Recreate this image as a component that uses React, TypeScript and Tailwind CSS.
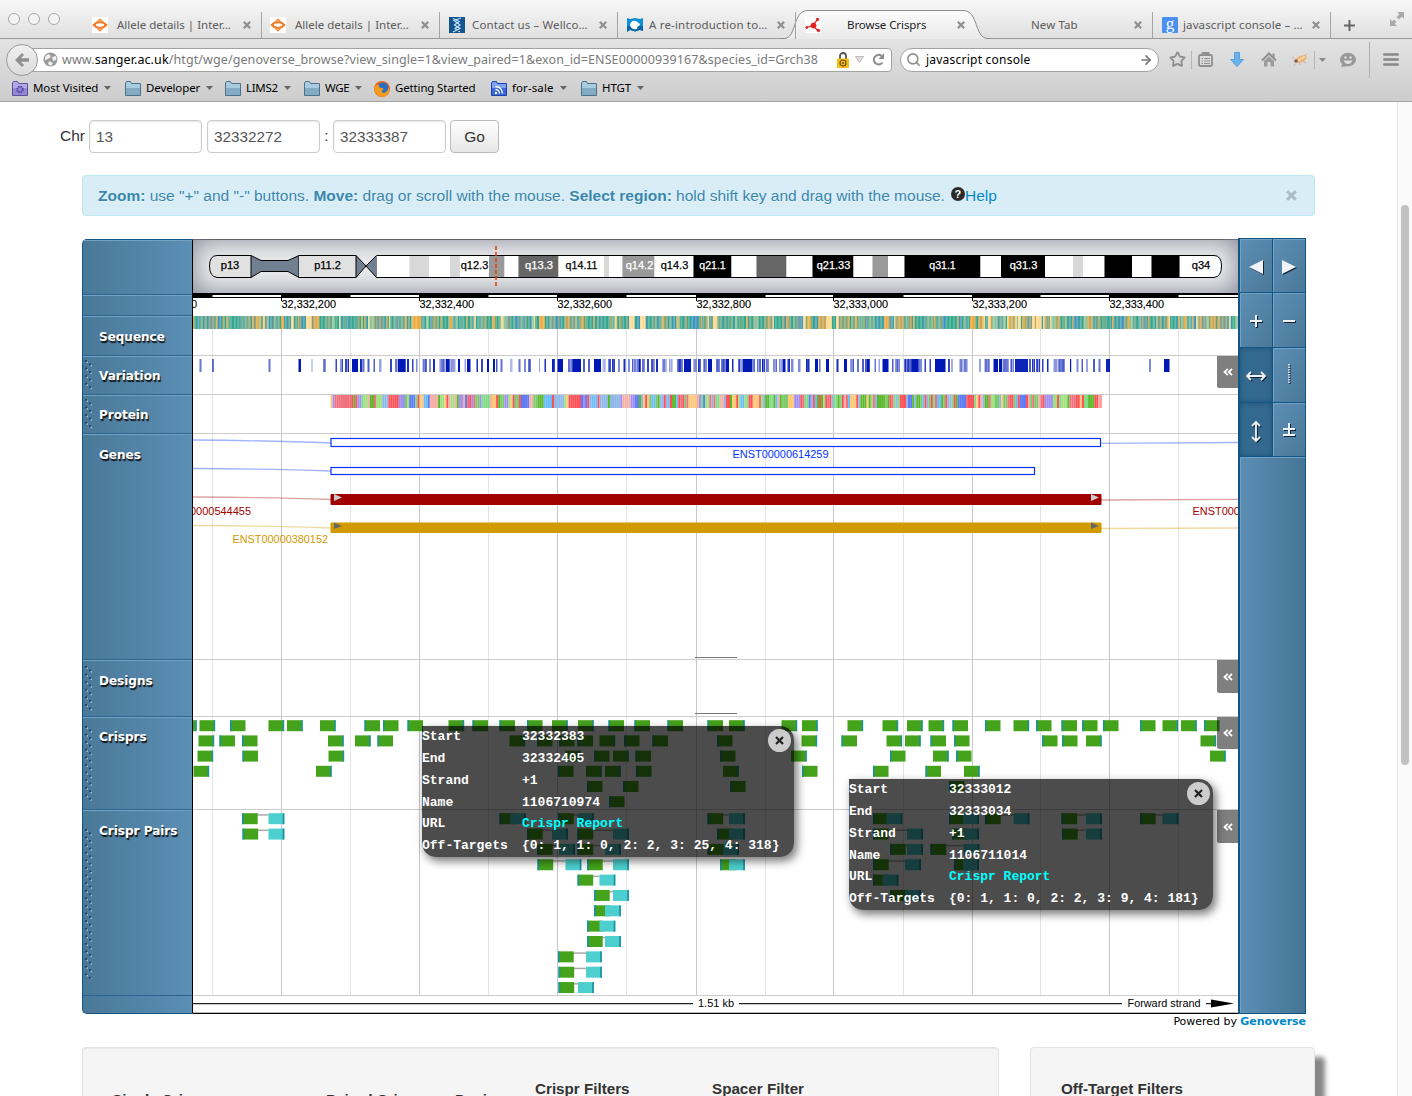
import { type ReactNode } from "react";
import { Search, Star, ArrowRight } from "lucide-react";

const LEFT = 193;
const WIDTH = 1045;
const MAJOR = [281.5, 419.5, 557.5, 696.5, 833.5, 972.5, 1109.5];
const MINOR = [212.5, 350.5, 488.5, 626.5, 765.5, 903.5, 1040.5, 1178.5];

function noise(seed: number) {
  let s = seed;
  return () => {
    s = (s * 1664525 + 1013904223) % 4294967296;
    return s / 4294967296;
  };
}

function Track({ top, height, grid = true, line = true, children }: { top: number; height: number; grid?: boolean; line?: boolean; children?: ReactNode }) {
  return (
    <svg className="block shrink-0" width={WIDTH} height={height} viewBox={`${LEFT} ${top} ${WIDTH} ${height}`}>
      {grid && MINOR.map((x) => <rect key={x} x={x - 0.5} y={top} width={1} height={height} fill="#e4e4e4" />)}
      {grid && MAJOR.map((x) => <rect key={x} x={x - 0.5} y={top} width={1} height={height} fill="#c8c8c8" />)}
      {children}
      {line && <rect x={LEFT} y={top + height - 1} width={WIDTH} height={1} fill="#cccccc" />}
    </svg>
  );
}

const BANDS: [number, number, string][] = [
  [376.5, 409.5, "#fff"], [409.5, 429, "#d8d8d8"], [429, 450, "#fff"], [450, 460, "#d8d8d8"], [460, 489, "#fff"],
  [489, 504.5, "#999"], [504.5, 518.5, "#fff"], [518.5, 558.5, "#666"], [558.5, 604, "#fff"], [604, 609, "#d8d8d8"],
  [609, 622.5, "#fff"], [622.5, 654.5, "#999"], [654.5, 693.5, "#fff"], [693.5, 731.5, "#000"], [731.5, 756.5, "#fff"],
  [756.5, 786.5, "#666"], [786.5, 812.5, "#fff"], [812.5, 853.5, "#000"], [853.5, 872.5, "#fff"], [872.5, 888, "#999"],
  [888, 904.5, "#fff"], [904.5, 980.5, "#000"], [980.5, 1001, "#fff"], [1001, 1045, "#000"], [1045, 1073, "#fff"],
  [1073, 1083, "#d8d8d8"], [1083, 1104.5, "#fff"], [1104.5, 1132, "#000"], [1132, 1151.5, "#fff"], [1151.5, 1179.5, "#000"],
];
const BAND_NAMES: [number, string, string, number][] = [
  [230, "p13", "#000", 18.5], [327.5, "p11.2", "#000", 26.5], [474.5, "q12.3", "#000", 27.5], [539, "q13.3", "#fff", 28], [581.5, "q14.11", "#000", 32],
  [639.5, "q14.2", "#fff", 27.5], [674.5, "q14.3", "#000", 27.5], [712.5, "q21.1", "#fff", 26.5], [833.5, "q21.33", "#fff", 33.5], [942.5, "q31.1", "#fff", 26.5],
  [1023.5, "q31.3", "#fff", 27.5], [1201, "q34", "#000", 18.5],
];

function Karyotype() {
  return (
    <div className="h-[54px] bg-[#ececee] shadow-[inset_0_0_26px_#7d8190,inset_0_1px_0_#444]">
      <Track top={239} height={54} grid={false} line={false}>
        <path d="M251 255.5H217Q209.500 255.500 209.500 266T217 277.500H251Z" fill="#e1e1e1" />
        <path d="M251 255.500L261 260.500H288L299 255.500V277.500L288 271.500H261L251 277.500Z" fill="#708090" stroke="#000" />
        <rect x={299} y={255} width={57} height={22} fill="#e1e1e1" />
        <path d="M356 255.500L366 266L376.500 255.500V277.500L366 266L356 277.500Z" fill="#708090" stroke="#000" />
        <path d="M1179.500 255.500H1214Q1221.500 255.500 1221.500 266T1214 277.500H1179.500Z" fill="#fff" />
        {BANDS.map(([a, b, fill]) => <rect key={a} x={a} y={255} width={b - a} height={22} fill={fill} />)}
        <path d="M251 255.500H217Q209.500 255.500 209.500 266T217 277.500H251M299 255.500H356M299 277.500H356M376.500 255.500H1214Q1221.500 255.500 1221.500 266T1214 277.500H376.500" fill="none" stroke="#000" />
        {BAND_NAMES.map(([x, t, fill, w]) => (
          <text key={t + x} x={x} y={269} textAnchor="middle" textLength={w} lengthAdjust="spacingAndGlyphs" fill={fill} stroke={fill} strokeWidth={0.25} className="font-['Liberation_Sans'] text-[10.5px]">{t}</text>
        ))}
        <path d="M496 246V287" stroke="#f03c0c" strokeWidth={1.600} strokeDasharray="4 2" />
      </Track>
    </div>
  );
}

const TICKS = ["32,332,200", "32,332,400", "32,332,600", "32,332,800", "32,333,000", "32,333,200", "32,333,400"];

function Scale() {
  return (
    <Track top={293} height={23} line={false}>
      <rect x={LEFT} y={293} width={WIDTH} height={5} fill="#000" />
      <rect x={LEFT} y={298} width={WIDTH} height={18} fill="#fff" />
      {MINOR.map((x, i) => <rect key={x} x={x} y={295} width={(MAJOR[i] ?? 1240) - x - 0.500} height={2} fill="#fff" />)}
      {MAJOR.map((x, i) => (
        <g key={x}>
          <rect x={x - 0.500} y={297} width={1} height={4} fill="#000" />
          <text x={x} y={308} textLength={54.500} lengthAdjust="spacingAndGlyphs" className="font-['Liberation_Sans'] text-[11px]" stroke="#000" strokeWidth={0.150}>{TICKS[i]}</text>
        </g>
      ))}
      <text x={191} y={308} className="font-['Liberation_Sans'] text-[11px]">0</text>
    </Track>
  );
}

const SEQ = ["#33a78c", "#3c93bb", "#35a58e", "#f0a83a", "#88a670", "#fbd98f", "#6fa883", "#5fae9e", "#479d9c", "#c9a552", "#8cc59a", "#7f9d86", "#3f9fa0", "#33a78c", "#70b08a"];
const AMINO = ["#ff4f57", "#5bb82a", "#6bbcfb", "#feca7a", "#7fdb86", "#a090f0", "#5bb82a", "#f0707c", "#9fe080", "#8fb8e8", "#7ac96a", "#f5b0a8", "#ff4f57", "#5f7cf5"];

function Stripes({ from, to, step, y, palette, seed, repeat }: { from: number; to: number; step: number; y: number; palette: string[]; seed: number; repeat: number }) {
  const rand = noise(seed);
  const n = Math.ceil((to - from) / step);
  const colors: string[] = [];
  for (let i = 0; i < n; i++) {
    const next = palette[Math.floor(rand() * palette.length)];
    colors.push(i > 0 && rand() < repeat ? colors[i - 1] : next);
  }
  return (
    <g>
      {colors.map((fill, i) => {
        const x = from + i * step;
        return <rect key={i} x={x} y={y} width={Math.min(step, to - x)} height={13} fill={fill} />;
      })}
    </g>
  );
}

/* start, width, opacity of every cluster of variants */
const VARIANTS: [number, number, number][] = [
  [199.5, 2, 0.6], [212, 2, 0.6], [268.500, 2, 0.6], [298.500, 2.500, 1], [311.500, 1, 0.4], [323, 3, 0.7], [335.500, 1.500, 0.8], [340, 3, 0.8], [345, 2, 0.8], [347.500, 1.500, 0.9],
  [352, 6, 1], [360, 2.500, 0.9], [363, 1.500, 0.6], [367.500, 2, 0.7], [373.500, 1.500, 0.7], [379, 2.500, 0.4], [390, 2, 0.8], [395, 2, 0.6], [397.700, 8, 1], [407, 2, 0.9],
  [412, 1.500, 0.8], [416, 1.500, 0.5], [422.700, 4, 0.8], [429, 2, 0.5], [433, 2, 0.9], [439.500, 5, 0.85], [445.700, 4, 1], [450.500, 5, 0.5], [458, 2, 1], [464.500, 1.500, 0.4],
  [467, 3.500, 1], [476.500, 1.500, 0.9], [481, 2, 0.8], [487, 2, 1], [493, 2, 1], [496, 1.500, 0.7], [500.500, 2, 0.6], [510, 2.500, 0.3], [518.500, 2, 0.6], [524, 2, 0.5],
  [528, 3, 0.7], [539, 1, 0.4], [544.500, 1.500, 0.9], [552, 3, 0.9], [557.500, 5.500, 1], [568, 5, 0.7], [573, 8, 1], [583, 2, 0.7], [588, 2, 0.7], [594, 7, 1],
  [602.500, 3, 0.5], [608, 3, 0.8], [612, 3, 0.7], [618, 2, 0.5], [623.500, 2, 0.9], [628, 2, 0.5], [632, 5, 0.6], [637, 4, 0.9], [642, 3, 0.6], [647, 2, 0.8], [651, 4, 0.8], [656, 2, 0.9],
  [662, 5, 0.5], [669, 4, 0.4], [677, 6, 0.85], [684, 7, 1], [693.500, 3, 0.6], [698, 3, 0.9], [703, 4, 0.7], [708, 4, 1], [716, 4, 0.6], [721, 5, 0.8], [726, 3, 1], [732, 1.500, 0.9],
  [738, 5, 0.7], [743, 9, 1], [752, 3, 0.7], [757, 4, 0.6], [762, 3, 0.8], [766, 3, 0.7], [773, 4, 0.6], [779, 3, 0.6], [782.500, 3, 1], [787, 3, 0.8], [791, 2.500, 0.5], [798, 2.500, 0.5],
  [806, 4, 0.8], [815, 3, 1], [819, 1.500, 0.6], [826, 3, 1], [836.500, 2, 0.9], [844, 3, 1], [850, 4, 0.7], [857, 2, 0.6], [862, 2, 0.7], [865, 5, 0.9], [874.500, 1.500, 0.6], [878.500, 1.500, 0.4],
  [882.500, 6, 1], [892, 1.500, 0.7], [895, 5, 0.6], [904, 8, 0.8], [912, 6, 1], [918, 4, 0.7], [924.500, 1.500, 0.8], [929.500, 1.500, 0.8], [935, 10.500, 1], [948, 2, 0.8], [951.500, 1, 0.7],
  [959.500, 3, 0.7], [963.500, 4, 0.9], [979, 2, 0.4], [984.500, 5, 0.8], [993.500, 4.500, 1], [999, 3, 1], [1002.500, 6, 0.8], [1010, 4, 0.6], [1015, 13, 0.95], [1029, 2, 0.7], [1032, 3, 0.9], [1036, 4, 0.7],
  [1042, 1.500, 0.8], [1047, 1.500, 0.9], [1053.500, 4, 0.5], [1058.500, 6, 0.9], [1070, 1.200, 1], [1076.500, 2, 0.5], [1081.500, 1.500, 0.7], [1086, 2, 0.4], [1093, 2, 0.7], [1098.500, 2, 0.6],
  [1106, 4, 0.95], [1149, 2, 0.5], [1164, 5.500, 1],
];

function Variants() {
  const rand = noise(91);
  return (
    <Track top={356} height={39}>
      {VARIANTS.map(([x, w, o]) => {
        if (o >= 0.95 || w < 3) return <rect key={x} x={x} y={359} width={w} height={13} fill="#0018b4" opacity={o} />;
        return Array.from({ length: Math.round(w) }, (_, i) => (
          <rect key={`${x}-${i}`} x={x + i} y={359} width={1} height={13} fill="#0018b4" opacity={Math.min(1, o * (0.55 + rand() * 0.7))} />
        ));
      })}
    </Track>
  );
}

function Connector({ d, color }: { d: string; color: string }) {
  return <path d={d} fill="none" stroke={color} strokeWidth={1.300} opacity={0.370} />;
}

function Genes() {
  const label = "font-['Liberation_Sans'] text-[11px]";
  return (
    <Track top={434} height={226}>
      <Connector color="#0033ff" d="M193 440Q270 440.500 331 443M1101 443.300L1238 442.500" />
      <rect x={331} y={438.500} width={769.500} height={8} fill="#fff" stroke="#0033ff" strokeWidth={1.200} />
      <text x={732.500} y={458} textLength={96} lengthAdjust="spacingAndGlyphs" fill="#0033ff" className={label}>ENST00000614259</text>
      <Connector color="#0033ff" d="M193 468.500Q270 469 331 471" />
      <rect x={331} y={467.500} width={703.500} height={7} fill="#fff" stroke="#0033ff" strokeWidth={1.200} />
      <Connector color="#a00000" d="M193 497Q270 497.500 331 499.500M1101 500L1238 499.300" />
      <rect x={330.500} y={494} width={771} height={11} rx={1} fill="#a00000" />
      <path d="M334 494L342 497.500L334 501ZM1091 494L1099 497.500L1091 501Z" fill="#ccc" />
      <text x={190} y={514.500} textLength={61} lengthAdjust="spacingAndGlyphs" fill="#a00000" className={label}>0000544455</text>
      <text x={1192.500} y={514.500} textLength={96} lengthAdjust="spacingAndGlyphs" fill="#a00000" className={label}>ENST00000544455</text>
      <Connector color="#d09a00" d="M193 525.500Q270 526 331 528M1101 528.500L1238 528" />
      <rect x={330.500} y={522.500} width={771} height={10.500} rx={1} fill="#d09a00" />
      <path d="M334 522.500L342 526L334 529ZM1091 522.500L1099 526L1091 529Z" fill="#666" />
      <text x={232.500} y={543} textLength={95.500} lengthAdjust="spacingAndGlyphs" fill="#d09a00" className={label}>ENST00000380152</text>
      <rect x={695} y={657} width={42} height={1} fill="#777" />
    </Track>
  );
}

/* left edge of each guide; a trailing R marks the PAM on the right side */
const CRISPRS: string[] = [
  "181R 199.5R 230L 268.5R 287R 320R 364.5L 383L 407.5L 448.5R 472.5L 499.5L 527L 552R 578R 608.5L 634.5L 667.5L 707.5L 729R 781.5R 802R 847.5R 882.5R 907R 928.5R 952.5L 985L 1013.5R 1036L 1061.5L 1082L 1103L 1140L 1162.5R 1181R 1204L",
  "198.5R 219.5L 242L 328R 355R 377.5L 509.5R 537L 559L 577.5L 599.5R 624L 652.5L 717L 801.5R 841.5L 886.5R 905R 930.5L 954L 1042L 1062L 1086R 1200.5R",
  "197.5R 242.5L 328.5R 565R 594L 613R 635.5L 720L 791R 890L 933R 956L 1210R",
  "193.5R 316R 558L 586R 605R 636L 723R 802L 873L 925.5L 964R",
  "587L 623L 730L 949L",
  "609L",
];

function Crisprs() {
  return (
    <Track top={717} height={93}>
      {CRISPRS.flatMap((row, r) =>
        row.split(" ").map((item) => {
          const x = parseFloat(item);
          const y = 720.200 + r * 15.200;
          return (
            <g key={`${r}-${item}`}>
              <rect x={x} y={y} width={15.500} height={11} fill="#45a31b" />
              <rect x={item.endsWith("R") ? x + 14.200 : x} y={y} width={1.500} height={11} fill="#1b93a0" />
            </g>
          );
        }),
      )}
    </Track>
  );
}

const PAIRS: [number, number][][] = [
  [[242, 268.5], [499.5, 510], [558, 578], [707.5, 729], [873, 886.5], [949, 963], [985, 1013.5], [1061.5, 1086], [1140, 1162.5]],
  [[242.5, 268.5], [527, 552], [577.5, 613], [717, 729], [873, 907], [952, 963], [1062, 1086]],
  [[537, 559], [577.5, 605], [707.5, 723], [890, 907], [930.5, 963.5]],
  [[537.5, 565.5], [587, 613], [720, 729], [873, 905], [954, 963]],
  [[577.5, 599.5], [873, 882.5]],
  [[594, 613], [890, 905]],
  [[594, 605]], [[587, 599.5]], [[587, 605]], [[558, 586]], [[558.5, 586]], [[558.5, 578]],
];

function Pairs() {
  return (
    <Track top={810} height={186}>
      {PAIRS.flatMap((row, r) =>
        row.map(([a, b]) => {
          const y = 813.200 + r * 15.350;
          return (
            <g key={`${r}-${a}`}>
              <rect x={a + 15} y={y + 1} width={Math.max(0, b - a - 15)} height={1.500} fill="#aaa" />
              <rect x={a} y={y} width={15.700} height={11} fill="#45a31b" />
              <rect x={a} y={y} width={1.700} height={11} fill="#1b93a0" />
              <rect x={b} y={y} width={15.700} height={11} fill="#4dcfcf" />
              <rect x={b + 14.200} y={y} width={1.700} height={11} fill="#1b93a0" />
            </g>
          );
        }),
      )}
    </Track>
  );
}

function Strand() {
  return (
    <Track top={996} height={17} grid={false} line={false}>
      <path d="M193 1003.700H693M739 1003.700H1122M1206 1003.700H1213" stroke="#222" strokeWidth={1.300} />
      <path d="M1211 999.500L1234 1003.500L1211 1007.500Z" fill="#000" />
      <text x={698} y={1007} textLength={36} lengthAdjust="spacingAndGlyphs" className="font-['Liberation_Sans'] text-[11px]">1.51 kb</text>
      <text x={1127.500} y={1007} textLength={73} lengthAdjust="spacingAndGlyphs" className="font-['Liberation_Sans'] text-[11px]">Forward strand</text>
      <rect x={193} y={1012} width={WIDTH} height={1} fill="#bbb" />
    </Track>
  );
}

function Grip({ height }: { height: number }) {
  const rows = Math.floor(height / 7.500);
  return (
    <svg className="block shrink-0" width={9} height={height}>
      {Array.from({ length: rows }, (_, i) => (
        <g key={i}>
          <rect x={0} y={i * 7.600} width={2} height={2} fill="#23435c" />
          <rect x={1.500} y={i * 7.600 + 1.500} width={1.500} height={1.500} fill="#9dbdd3" />
          <rect x={4} y={i * 7.600 + 3.500} width={2} height={2} fill="#23435c" />
          <rect x={5.500} y={i * 7.600 + 5} width={1.500} height={1.500} fill="#9dbdd3" />
        </g>
      ))}
    </svg>
  );
}

function Label({ size, name, grip, gripPad = "pt-[3px]", className = "" }: { size: string; name?: string; grip?: number; gripPad?: string; className?: string }) {
  return (
    <div className={`relative flex border-t border-t-[#76a2c1] border-b border-b-[#2d6590] pl-[2px] ${size}`}>
      <div className={`w-[14px] ${gripPad}`}>{grip ? <Grip height={grip} /> : null}</div>
      {name && <div className={`font-['DejaVu_Sans'] text-[12px] leading-[16px] font-bold whitespace-nowrap text-white [text-shadow:1px_2px_1px_#111] ${className}`}>{name}</div>}
    </div>
  );
}

function Handle({ className }: { className: string }) {
  return (
    <div className={`absolute right-0 flex w-[21px] items-center justify-center rounded-bl-[2px] bg-black/50 ${className}`}>
      <svg width="10" height="8" viewBox="0 0 10 8" fill="none" stroke="#fff" strokeWidth="1.8"><path d="M4.800 0.800L1.500 4L4.800 7.200M9 0.800L5.700 4L9 7.200" /></svg>
    </div>
  );
}

function Popup({ className, rows }: { className: string; rows: [string, string][] }) {
  return (
    <div className={`absolute h-[131px] rounded-[14px] rounded-tl-none bg-black/70 font-['Liberation_Mono'] text-[13px] leading-[21.8px] font-bold text-white shadow-[3px_4px_10px_rgba(0,0,0,0.55)] ${className}`}>
      <div>
        {rows.map(([k, v]) => (
          <div key={k} className="flex h-[21.850px] whitespace-pre">
            <span className="w-[100px]">{k}</span>
            <span className={k === "URL" ? "text-[#00ffff]" : ""}>{v}</span>
          </div>
        ))}
      </div>
      <div className="absolute top-[2.500px] right-[3.500px] flex size-[23px] items-center justify-center rounded-full bg-[#cccccc]">
        <svg width="9" height="9" viewBox="0 0 9 9" stroke="#222" strokeWidth="2.200"><path d="M1 1L8 8M8 1L1 8" /></svg>
      </div>
    </div>
  );
}

function CloseX({ color = "#8f8f8f", size = 8 }: { color?: string; size?: number }) {
  return <svg className="shrink-0" width={size} height={size} viewBox="0 0 8 8" stroke={color} strokeWidth="2.200"><path d="M0.800 0.800L7.200 7.200M7.200 0.800L0.800 7.200" /></svg>;
}

function OrangeKnot() {
  return (
    <svg width="16" height="16" viewBox="0 0 16 16">
      <rect width="16" height="16" fill="#fff" />
      <path d="M0.500 8L3.500 5.500L8 1.200L12.500 5.500L15.500 8L12.500 10.500L8 14.800L3.500 10.500Z" fill="#f58a3c" />
      <ellipse cx="8" cy="8" rx="4" ry="1.900" fill="#fff" />
      <path d="M4.200 5.500L6.500 4.800M9.500 4.800L11.800 5.500M4.200 10.500L6.500 11.200M9.500 11.200L11.800 10.500M7 3.800H9M7 12.200H9" stroke="#fbd3b5" strokeWidth=".8" />
      <path d="M1.500 8L4 6L8 5.200L12 6L14.500 8L12 10L8 10.800L4 10Z" fill="none" stroke="#f07a26" strokeWidth="1.500" />
    </svg>
  );
}

function Tab({ icon, text, width, iconPad, textPad, tracking = "", active }: { icon?: ReactNode; text: string; width: string; iconPad: string; textPad: string; tracking?: string; active?: boolean }) {
  return (
    <div className={`relative flex h-[27px] items-center pb-px ${width} ${iconPad} ${active ? "" : "border-r border-[#a5a5a5]"}`}>
      {icon}
      <span className={`font-['Noto_Sans'] text-[11.500px] whitespace-nowrap ${textPad} ${tracking} ${active ? "text-[#1d1d1d]" : "text-[#5b5b5b]"}`}>{text}</span>
      <div className="absolute right-[10.500px] flex"><CloseX /></div>
    </div>
  );
}

function Folder({ kind = "plain" }: { kind?: "plain" | "gear" | "feed" }) {
  const top = kind === "plain" ? "#a9cbe0" : kind === "gear" ? "#b4a8e6" : "#7da4f0";
  const bottom = kind === "plain" ? "#7ba3bd" : kind === "gear" ? "#8d7fcb" : "#2a57d8";
  const edge = kind === "plain" ? "#4e7089" : kind === "gear" ? "#5c4fa0" : "#1c3fa8";
  return (
    <svg className="shrink-0" width="16" height="15" viewBox="0 0 16 15">
      <path d="M.500 14.500V2L1.500 .500H5.500L6.500 2.500H15.500V14.500Z" fill={top} stroke={edge} />
      <rect x="1" y="7" width="14" height="7" fill={bottom} opacity=".8" />
      {kind === "gear" && <circle cx="8" cy="8.500" r="2.800" fill="none" stroke="#5547a8" strokeWidth="2" strokeDasharray="1.600 .6" />}
      {kind === "feed" && <g fill="none" stroke="#fff" strokeWidth="1.400"><path d="M4.500 8.500A4 4 0 0 1 8.500 12.500M4.500 5.500A7 7 0 0 1 11.500 12.500" /><circle cx="5" cy="12" r=".5" /></g>}
    </svg>
  );
}

function Bookmark({ icon, text, width, tracking = "", arrow = true }: { icon: ReactNode; text: string; width: string; tracking?: string; arrow?: boolean }) {
  return (
    <div className={`flex shrink-0 items-center gap-[5px] ${width}`}>
      {icon}
      <span className={`-mt-[2px] font-['Noto_Sans'] text-[11.500px] leading-4 whitespace-nowrap text-black ${tracking}`}>{text}</span>
      {arrow && <svg className="-mt-px ml-px shrink-0" width="7" height="4" viewBox="0 0 7 4"><path d="M0 0H7L3.500 4Z" fill="#666" /></svg>}
    </div>
  );
}

function Browser() {
  return (
    <div className="h-[102px] border-b border-[#a3a3a3] bg-linear-to-b from-[#f6f6f6] via-[#e2e2e2] via-40% to-[#cdcdcd]">
      <div className="relative flex h-[39px] items-end bg-linear-to-b from-[#f8f8f8] to-[#dfdfdf] shadow-[inset_0_-1px_0_#9a9a9a]">
        <svg className="absolute bottom-0 left-[780px]" width="210" height="30" viewBox="780 9 210 30">
          <defs><linearGradient id="tab" x1="0" y1="0" x2="0" y2="1"><stop offset="0" stopColor="#fbfbfb" /><stop offset="1" stopColor="#e9e9e9" /></linearGradient></defs>
          <path d="M780 38.500H784C797 38.500 792 10.500 808 10.500H963C979 10.500 974 38.500 988 38.500V40H780Z" fill="url(#tab)" />
          <path d="M780 38.500H784C797 38.500 792 10.500 808 10.500H963C979 10.500 974 38.500 988 38.500H990" fill="none" stroke="#8c8c8c" />
        </svg>
        <div className="flex h-[39px] w-[84px] gap-[8px] pt-[13px] pl-[8px]">
          <i className="size-3 rounded-full border border-[#a8a8a8] bg-[#f4f4f4]" />
          <i className="size-3 rounded-full border border-[#a8a8a8] bg-[#f4f4f4]" />
          <i className="size-3 rounded-full border border-[#a8a8a8] bg-[#f4f4f4]" />
        </div>
        <Tab icon={<OrangeKnot />} text="Allele details | Inter…" width="w-[178px]" iconPad="pl-[8px]" textPad="pl-[9px]" />
        <Tab icon={<OrangeKnot />} text="Allele details | Inter…" width="w-[178px]" iconPad="pl-[8px]" textPad="pl-[9px]" />
        <Tab icon={<svg width="16" height="16" viewBox="0 0 16 16"><rect width="16" height="16" fill="#15558e" /><path d="M12 1L5 3.500L11 8L6 11.500L11 15M4 1.500L10 4.500L5.500 8L11 11.500L4 15" fill="none" stroke="#b8dcf0" strokeWidth="1.300" /></svg>} text="Contact us – Wellco…" width="w-[178px]" iconPad="pl-[9px]" textPad="pl-[7px]" tracking="tracking-[0.120px]" />
        <Tab icon={<svg width="16" height="16" viewBox="0 0 16 16"><path d="M0 1L3 2L8 1L13 2L16 1V14L13 13L8 14.500L3 13L0 15Z" fill="#0f8fd6" /><path d="M0 9V15L3 13L8 14.500L13 13L16 14V9Z" fill="#07558f" opacity=".7" /><path d="M3 8Q4 3 9 4L13 7L12 9Q10 9 10 12Q4 13 3 8Z" fill="#fff" /></svg>} text="A re-introduction to…" width="w-[178px]" iconPad="pl-[9px]" textPad="pl-[6px]" tracking="tracking-[0.180px]" />
        <Tab active icon={<svg width="16" height="16" viewBox="0 0 16 16"><rect width="16" height="16" fill="#fff" /><g stroke="#e02020" fill="#e02020"><path d="M1.500 10.500L8 8.500L12 3M8 9L13.500 14" strokeWidth="1.200" fill="none" /><circle cx="8.500" cy="8.500" r="2.500" /><circle cx="12.500" cy="2.500" r="1.200" /><circle cx="1.800" cy="10.500" r="1" /><circle cx="13.500" cy="13.500" r="1.200" /></g></svg>} text="Browse Crisprs" width="w-[179px]" iconPad="pl-[9px]" textPad="pl-[26px]" tracking="tracking-[-0.080px]" />
        <Tab text="New Tab" width="w-[178px]" iconPad="pl-[56px]" textPad="pl-0" tracking="tracking-[0.100px]" />
        <Tab icon={<span className="flex size-4 items-center justify-center rounded-[1px] bg-[#4a90f0] pb-1 font-['Liberation_Serif'] text-[17px] leading-none text-white">g</span>} text="javascript console – …" width="w-[178px]" iconPad="pl-[9px]" textPad="pl-[5px]" tracking="tracking-[0.120px]" />
        <svg className="mb-[8px] ml-[13px]" width="11" height="11" viewBox="0 0 11 11" stroke="#666" strokeWidth="2"><path d="M5.500 0V11M0 5.500H11" /></svg>
        <svg className="absolute top-[11px] right-[7px]" width="16" height="16" viewBox="0 0 16 16" fill="#aaa"><path d="M8 1H15V8L12.700 5.700L10 8.500L7.500 6L10.300 3.300ZM1 8L3.300 10.300L5 8.600L7.400 11L5.700 12.700L8 15H1Z" /></svg>
      </div>

      <div className="relative flex h-[41px] items-center">
        <div className="z-10 ml-[6px] flex size-8 shrink-0 items-center justify-center rounded-full border border-[#9a9a9a] bg-linear-to-b from-[#f0f0f0] to-[#dcdcdc]">
          <svg width="16" height="16" viewBox="0 0 16 16" fill="#8f8f8f"><path d="M1 8L8 1L10 3L6.800 6.300H15V9.700H6.800L10 13L8 15Z" /></svg>
        </div>
        <div className="-ml-[8px] flex h-6 w-[862px] shrink-0 items-center rounded-r-[4px] border border-[#a2a2a2] bg-white pl-[12px]">
          <svg className="shrink-0" width="15" height="15" viewBox="0 0 15 15"><circle cx="7.500" cy="7.500" r="7" fill="#9a9a9a" /><path d="M2 5Q5 1 7 3T5 7T2 8ZM9 5L13 4L13.500 8L10 9ZM6 9L10 11L8 14L5 12Z" fill="#eee" /></svg>
          <span className="ml-[4px] w-[766px] pt-px font-['Noto_Sans'] text-[12.500px] tracking-[0.100px] whitespace-nowrap text-[#7a7a7a]">www.<span className="text-black">sanger.ac.uk</span>/htgt/wge/genoverse_browse?view_single=1&amp;view_paired=1&amp;exon_id=ENSE00000939167&amp;species_id=Grch38</span>
          <svg className="ml-[9px] shrink-0" width="12" height="16" viewBox="0 0 12 16"><path d="M3 7V4A3 3 0 0 1 9 4V7" fill="none" stroke="#555" strokeWidth="1.800" /><rect y="6.500" width="12" height="9.500" rx="1" fill="#f5bd12" /><circle cx="6" cy="11" r="3" fill="none" stroke="#6b4c00" strokeWidth="1.200" /><circle cx="6" cy="11" r="1" fill="#6b4c00" /></svg>
          <svg className="ml-[6px] shrink-0" width="9" height="7" viewBox="0 0 9 7"><path d="M0.500 0.500H8.500L4.500 6.500Z" fill="#ddd" stroke="#bbb" /></svg>
          <svg className="ml-[8px] shrink-0" width="13" height="13" viewBox="0 0 13 13"><path d="M10.500 9.500A4.800 4.800 0 1 1 9.500 2.800" fill="none" stroke="#8c8c8c" strokeWidth="2" /><path d="M12 0V6H6.500Z" fill="#8c8c8c" /></svg>
        </div>
        <div className="ml-[8px] flex h-6 w-[259px] shrink-0 items-center rounded-full border border-[#a2a2a2] bg-white pl-[5px]">
          <Search size={15} color="#8f8f8f" strokeWidth={2.500} />
          <span className="ml-[5px] w-[213px] font-['Noto_Sans'] text-[12px] tracking-[0.230px] text-black">javascript console</span>
          <ArrowRight size={14} color="#777" strokeWidth={2.800} />
        </div>
        <Star className="ml-[10px] shrink-0" size={17} color="#8f8f8f" strokeWidth={2.600} />
        <i className="ml-[5px] h-[18px] w-px bg-[#b5b5b5]" />
        <svg className="ml-[6px] shrink-0" width="15" height="15" viewBox="0 0 15 15" fill="none" stroke="#8f8f8f"><rect x="1" y="3" width="13" height="11" rx="1.500" strokeWidth="1.800" /><path d="M4.500 3V1H10.500V3" strokeWidth="1.800" /><path d="M3.500 6.500H5M6 6.500H12M3.500 9H5M6 9H12M3.500 11.500H5M6 11.500H12" strokeWidth="1.200" /></svg>
        <svg className="ml-[17px] shrink-0" width="14" height="15" viewBox="0 0 14 15"><path d="M4.500 .500H9.500V7.500H13.500L7 14.500L.500 7.500H4.500Z" fill="#66b3ef" stroke="#5a9fd6" /></svg>
        <svg className="ml-[17px] shrink-0" width="16" height="15" viewBox="0 0 16 15"><path d="M1 8.500L8 1.500L15 8.500" fill="none" stroke="#8f8f8f" strokeWidth="2" /><path d="M3 9L8 4.200L13 9V14.500H9.500V10H6.500V14.500H3Z" fill="#9c9c9c" /><path d="M11.500 1.500H13.500V6L11.500 4Z" fill="#8f8f8f" /></svg>
        <svg className="ml-[15px] shrink-0" width="17" height="14" viewBox="0 0 17 14"><ellipse cx="9" cy="6" rx="6" ry="3.200" transform="rotate(-25 9 6)" fill="#eab676" /><path d="M6 7.500L13 3.500" stroke="#f6d9a8" strokeWidth="1.500" /><circle cx="4" cy="8" r="1.800" fill="#8f5448" /><path d="M2 5L0 4M3 11L2 13M7 9L8 12M11 8L14 10M12 3L15 1" stroke="#c8a08a" strokeWidth=".8" /></svg>
        <i className="ml-[5px] h-[18px] w-px bg-[#b5b5b5]" />
        <svg className="ml-[4px] shrink-0" width="7" height="4" viewBox="0 0 7 4"><path d="M0 0H7L3.500 4Z" fill="#888" /></svg>
        <svg className="ml-[14px] shrink-0" width="16" height="16" viewBox="0 0 16 16"><ellipse cx="8" cy="7.500" rx="8" ry="6.800" fill="#989898" /><path d="M1 15L3 10L8 14Z" fill="#989898" /><circle cx="5.500" cy="5.500" r="1.200" fill="#e0e0e0" /><circle cx="10.500" cy="5.500" r="1.200" fill="#e0e0e0" /><path d="M3.500 8.500H12.500Q11 12 8 12T3.500 8.500Z" fill="#e0e0e0" /></svg>
        <i className="ml-[13px] h-9 w-px bg-[#b0b0b0]" />
        <svg className="ml-[13px] shrink-0" width="16" height="13" viewBox="0 0 16 13" stroke="#888" strokeWidth="2.400" strokeLinecap="round"><path d="M1.200 1.500H14.800M1.200 6.500H14.800M1.200 11.500H14.800" /></svg>
      </div>

      <div className="flex h-[17px] items-center pl-[12px]">
        <Bookmark icon={<Folder kind="gear" />} text="Most Visited" width="w-[113px]" tracking="tracking-[-0.060px]" />
        <Bookmark icon={<Folder />} text="Developer" width="w-[100px]" tracking="tracking-[-0.120px]" />
        <Bookmark icon={<Folder />} text="LIMS2" width="w-[79px]" tracking="tracking-[-0.300px]" />
        <Bookmark icon={<Folder />} text="WGE" width="w-[70px]" tracking="tracking-[-0.300px]" />
        <Bookmark arrow={false} icon={<svg className="shrink-0" width="16" height="16" viewBox="0 0 16 16"><circle cx="8" cy="8" r="8" fill="#e8641b" /><circle cx="9" cy="7" r="5.500" fill="#2a6fc0" /><path d="M0 7Q2 3 5 4Q4 7 8 7L10 8Q6 10 9 12Q13 12 15 6Q17 13 10 16Q1 16 0 7Z" fill="#f59a1f" /></svg>} text="Getting Started" width="w-[117px]" tracking="tracking-[-0.150px]" />
        <Bookmark icon={<Folder kind="feed" />} text="for-sale" width="w-[90px]" tracking="tracking-[0.100px]" />
        <Bookmark icon={<Folder />} text="HTGT" width="w-[80px]" tracking="tracking-[-0.100px]" />
      </div>
    </div>
  );
}

function Control({ children, pressed, size }: { children: ReactNode; pressed?: boolean; size: string }) {
  return (
    <div className={`flex items-center justify-center border-r border-b border-[#115586] pt-[2px] ${size} ${pressed ? "bg-[#34698f] shadow-[inset_0_0_5px_#1d4f74]" : "bg-linear-to-br from-[#5d8fb4] to-[#4a7899] shadow-[inset_1px_1px_0_#76a2c1]"}`}>
      <svg width="24" height="24" viewBox="-12 -12 24 24" className="drop-shadow-[1px_1px_0_#112233]" stroke="#f0f4f8" fill="none" strokeWidth="2">{children}</svg>
    </div>
  );
}

const INPUT = "flex h-[33px] w-[113px] items-center rounded-[4px] border border-[#cccccc] bg-white pt-px pl-[6px] text-[15.300px] text-[#555] shadow-[inset_0_1px_2px_rgba(0,0,0,0.1)]";

export default function App() {
  return (
    <div className="relative h-[1096px] w-[1412px] overflow-hidden bg-white font-['Liberation_Sans',sans-serif]">
      <Browser />
      <div className="flex h-[994px]">
        <div className="w-[1397px] shrink-0">
          <div className="flex h-[73px] items-start pt-[18px] pl-[60px] text-[15.500px] text-[#333]">
            <span className="w-[29px] pt-[4px]">Chr</span>
            <div className={INPUT}>13</div>
            <div className={`ml-[5px] ${INPUT}`}>32332272</div>
            <span className="w-[13px] pt-[4px] text-center">:</span>
            <div className={INPUT}>32333387</div>
            <div className="ml-[4px] flex h-[33px] w-[49px] items-center justify-center rounded-[4px] border border-[#bbbbbb] bg-linear-to-b from-white to-[#e6e6e6] text-[15.500px]">Go</div>
          </div>

          <div className="ml-[82px] flex h-[41px] w-[1233px] items-center rounded-[4px] border border-[#bce8f1] bg-[#d9edf7] pl-[15px] text-[15.500px] whitespace-nowrap text-[#3a87ad] [text-shadow:0_1px_0_rgba(255,255,255,0.5)]">
            <span className="pt-px"><b>Zoom:</b> use "+" and "-" buttons. <b>Move:</b> drag or scroll with the mouse. <b>Select region:</b> hold shift key and drag with the mouse.</span>
            <span className="-mt-[3px] ml-[6px] flex size-[14px] items-center justify-center rounded-full bg-[#2b2b2b] text-[11px] font-bold text-white [text-shadow:none]">?</span>
            <span className="pt-px text-[#0088cc]">Help</span>
            <span className="mr-[17px] ml-auto"><CloseX color="#adbec6" size={11} /></span>
          </div>

          <div className="mt-[22px] ml-[82px] flex h-[776px] w-[1224px]">
            <div className="mt-px flex h-[775px] w-[111px] flex-col rounded-l-[5px] border border-[#115586] border-r-black bg-linear-to-r from-[#4a7899] to-[#5b8fb4]">
              <Label size="h-[55px]" />
              <Label size="h-[21px]" />
              <Label size="h-[40px]" name="Sequence" className="pt-[12px]" />
              <Label size="h-[39px]" name="Variation" className="pt-[11px]" grip={32} />
              <Label size="h-[39px]" name="Protein" className="pt-[11px]" grip={32} />
              <Label size="h-[226px]" name="Genes" className="pt-[12px]" />
              <Label size="h-[57px]" name="Designs" className="pt-[12px]" grip={46} gripPad="pt-[5px]" />
              <Label size="h-[93px]" name="Crisprs" className="pt-[11px]" grip={77} gripPad="pt-[8px]" />
              <Label size="h-[186px]" name="Crispr Pairs" className="pt-[12px]" grip={150} gripPad="pt-[18px]" />
            </div>
            <div className="relative mt-px flex h-[775px] w-[1045px] flex-col border-b border-black">
              <Karyotype />
              <Scale />
              <Track top={316} height={40}><Stripes from={193} to={1238} step={1.380} y={316} palette={SEQ} seed={7} repeat={0.350} /></Track>
              <Variants />
              <Track top={395} height={39}><Stripes from={330.500} to={1101.500} step={2.070} y={395} palette={AMINO} seed={23} repeat={0.300} /></Track>
              <Genes />
              <Track top={660} height={57}><rect x={695} y={713} width={42} height={1} fill="#777" /></Track>
              <Crisprs />
              <Pairs />
              <Strand />
              <Handle className="top-[117px] h-8" />
              <Handle className="top-[421px] h-[33px]" />
              <Handle className="top-[478px] h-8" />
              <Handle className="top-[571px] h-[33px]" />
              <Popup className="top-[487px] left-[229px] w-[372px]" rows={[["Start", "32332383"], ["End", "32332405"], ["Strand", "+1"], ["Name", "1106710974"], ["URL", "Crispr Report"], ["Off-Targets", "{0: 1, 1: 0, 2: 2, 3: 25, 4: 318}"]]} />
              <Popup className="top-[540px] left-[656px] w-[364px]" rows={[["Start", "32333012"], ["End", "32333034"], ["Strand", "+1"], ["Name", "1106711014"], ["URL", "Crispr Report"], ["Off-Targets", "{0: 1, 1: 0, 2: 2, 3: 9, 4: 181}"]]} />
            </div>
            <div className="flex h-[776px] w-[68px] flex-col border-t border-l-2 border-[#115586]">
              <div className="flex flex-wrap">
                <Control size="h-[54px] w-[33px]"><path d="M-7 0L7 -7V7Z" fill="#f0f4f8" stroke="none" /></Control>
                <Control size="h-[54px] w-[33px]"><path d="M7 0L-7 -7V7Z" fill="#f0f4f8" stroke="none" /></Control>
                <Control size="h-[55px] w-[33px]"><path d="M-6 0H6M0 -6V6" /></Control>
                <Control size="h-[55px] w-[33px]"><path d="M-6 0H6" /></Control>
                <Control pressed size="h-[55px] w-[33px]"><path d="M-8 0H8M-5 -4L-9 0L-5 4M5 -4L9 0L5 4" strokeWidth="1.800" /></Control>
                <Control size="h-[55px] w-[33px]"><path d="M0 -12V8" strokeWidth="1.500" strokeDasharray="1.500 1" /></Control>
                <Control pressed size="h-[54px] w-[33px]"><path d="M0 -8V9M-4 -5L0 -9L4 -5M-4 6L0 10L4 6" strokeWidth="1.800" /></Control>
                <Control size="h-[54px] w-[33px]"><path d="M-6 -2H6M0 -8V3M-6 4H6" /></Control>
              </div>
              <div className="flex-1 border-r border-b border-[#115586] bg-linear-to-r from-[#5b8fb4] to-[#467596] shadow-[inset_1px_1px_0_#76a2c1]" />
            </div>
          </div>

          <div className="flex h-[33px] w-[1306px] justify-end font-['DejaVu_Sans'] text-[11px] leading-[15px] tracking-[-0.030px] text-black">
            <span>Powered by <b className="text-[#0088cc]">Genoverse</b></span>
          </div>

          <div className="ml-[82px] flex h-[60px] gap-[31px] text-[15.200px] leading-5 font-bold whitespace-nowrap text-[#333]">
            <div className="flex h-[200px] w-[917px] rounded-[4px] border border-[#e3e3e3] bg-[#f5f5f5] pl-[29px] shadow-[inset_0_1px_1px_rgba(0,0,0,0.05)]">
              <span className="w-[214px] pt-[42px]">Single Crisprs</span>
              <span className="w-[129px] pt-[42px]">Paired Crisprs</span>
              <span className="w-[80px] pt-[42px]">Designs</span>
              <span className="w-[177px] pt-[31px]">Crispr Filters</span>
              <span className="pt-[31px]">Spacer Filter</span>
            </div>
            <div className="h-[200px] w-[285px] rounded-[4px] border border-[#e3e3e3] bg-[#f5f5f5] pt-[31px] pl-[30px] shadow-[10px_10px_5px_#888888]">
              Off-Target Filters
            </div>
          </div>
        </div>
        <div className="h-full w-[15px] border-l border-[#e6e6e6] bg-[#fafafa] pt-[103px] pl-[3px]">
          <div className="h-[560px] w-[8px] rounded-full bg-[#c1c1c1]" />
        </div>
      </div>
    </div>
  );
}
